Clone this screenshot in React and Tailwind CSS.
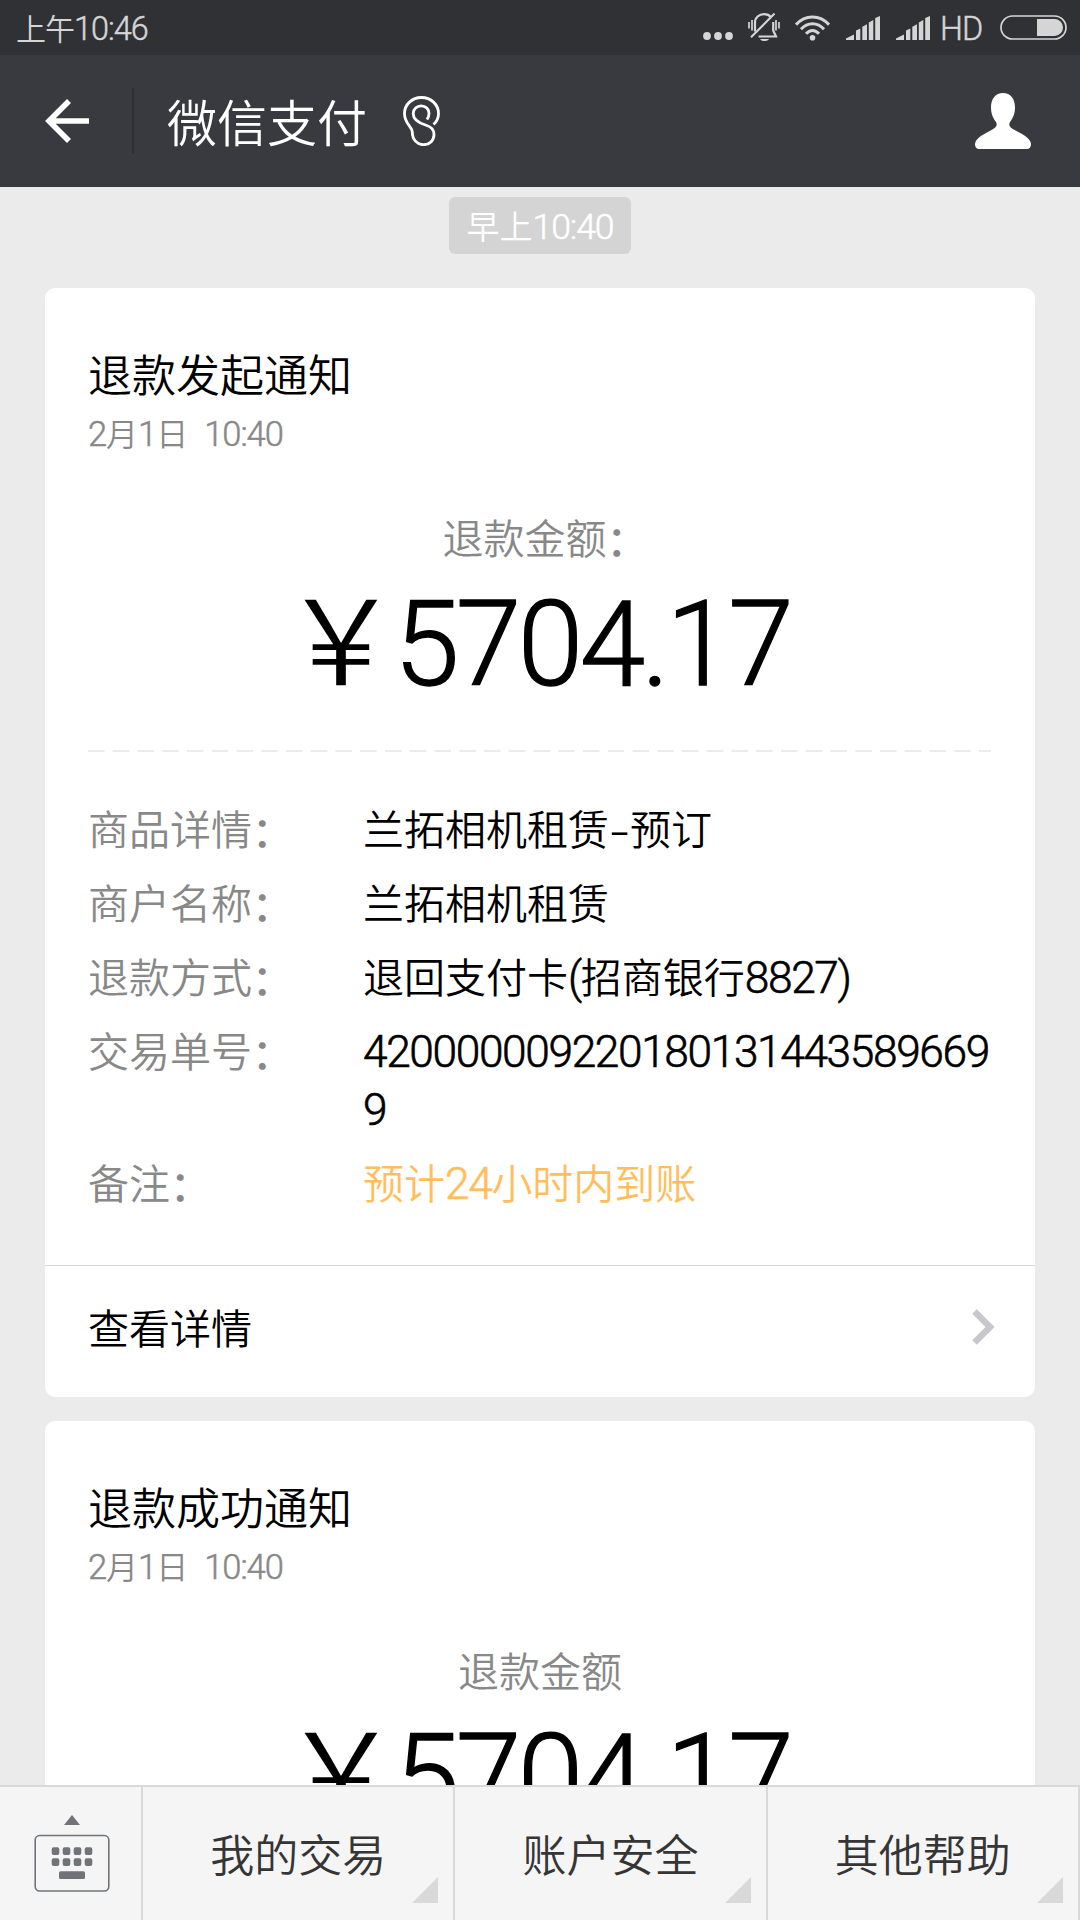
import React from 'react';

const notices = [
    {
        title: '退款发起通知',
        date: '2月1日',
        time: '10:40',
        label: '退款金额：',
        amount: '5704.17',
        rows: [
            { name: '商品详情：', value: '兰拓相机租赁-预订' },
            { name: '商户名称：', value: '兰拓相机租赁' },
            { name: '退款方式：', value: '退回支付卡(招商银行8827)' },
            { name: '交易单号：', value: '4200000092201801314435896699' },
            { name: '备注：', value: '预计24小时内到账', highlight: true },
        ],
    },
    {
        title: '退款成功通知',
        date: '2月1日',
        time: '10:40',
        label: '退款金额',
        amount: '5704.17',
        rows: [],
    },
];

const menus = ['我的交易', '账户安全', '其他帮助'];

// Latin runs are set in a slightly larger, tighter face than the Chinese text
function Mixed({ children }) {
    return children.split(/([0-9A-Z:.()]+|：|-)/).map((part, index) => {
        if (part === '：') {
            return (
                <span key={index} className="inline-block w-[31px] translate-y-[2px] font-medium leading-none">
                    {part}
                </span>
            );
        }
        if (part === '-') {
            return (
                <span key={index} className="inline-block w-[21px] scale-x-150 text-center leading-none">
                    {part}
                </span>
            );
        }
        if (index % 2 === 1) {
            return (
                <span key={index} className="break-all font-['Roboto','Noto_Sans_CJK_SC',sans-serif] text-[1.08em] font-light leading-none tracking-[-0.031em] [-webkit-text-stroke:0.014em_currentColor]">
                    {part}
                </span>
            );
        }
        return part;
    });
}

function SignalIcon() {
    return (
        <svg width="34" height="24" viewBox="0 0 34 24" fill="#d5d5d5">
            <path d="M0 24V22.6L8 18.6V24Z" />
            <path d="M10 24V14.5L14.3 12.4V24Z" />
            <path d="M16.3 24V10.8L21 8.2V24Z" />
            <path d="M22.8 24V6.6L27.3 4V24Z" />
            <path d="M29.2 24V2L34 0V24Z" />
        </svg>
    );
}

function StatusBar() {
    return (
        <div className="flex h-[55px] shrink-0 items-center bg-[#303135] pl-4 pr-[13px] text-[#d5d5d5]">
            <span className="pt-[2px] text-[30px] leading-none tracking-[-1px]">
                <Mixed>上午10:46</Mixed>
            </span>
            <div className="ml-auto flex items-center">
                <svg width="30" height="28" viewBox="0 0 30 28" fill="#d5d5d5">
                    <circle cx="4" cy="22" r="3.9" />
                    <circle cx="15" cy="22" r="3.9" />
                    <circle cx="26" cy="22" r="3.9" />
                </svg>
                {/* Muted bell with vibration marks */}
                <svg className="ml-[15px]" width="32" height="29" viewBox="0 0 32 29" fill="none" stroke="#d5d5d5" strokeWidth="1.7">
                    <path d="M7 18.5V9.5C7 4.5 11 1.2 16 1.2C19 1.2 21.5 2.3 23 4.2" strokeWidth="2.2" />
                    <path d="M25.2 9V17.5L28 23.5H10.5" strokeWidth="2.2" />
                    <path d="M3 24.3L26.5 0.6" strokeWidth="2.2" />
                    <path d="M1 9V15.5M4 7V17.5M28 7V17.5M31 9V15.5" />
                    <path d="M12 26H21C19.5 28.8 13.5 28.8 12 26Z" fill="#d5d5d5" stroke="none" />
                </svg>
                <svg className="ml-[15px]" width="35" height="26" viewBox="0 0 35 26" fill="none" stroke="#d5d5d5" strokeWidth="3">
                    <path d="M1 9.7C10 -0.7 25 -0.7 34 9.7" />
                    <path d="M6 14.2C12.5 6.8 22.5 6.8 29 14.2" />
                    <path d="M11 18.8C15 14.4 20 14.4 24 18.8" />
                    <circle cx="17.5" cy="22.8" r="2.8" fill="#d5d5d5" stroke="none" />
                </svg>
                <div className="ml-4 flex gap-4">
                    <SignalIcon />
                    <SignalIcon />
                </div>
                <span className="ml-[10px] w-[47px] pt-[2px] text-[30px] leading-none">
                    <Mixed>HD</Mixed>
                </span>
                <svg className="ml-[13px]" width="67" height="25" viewBox="0 0 67 25">
                    <rect x="1" y="1" width="65" height="23" rx="11.5" fill="none" stroke="#d5d5d5" strokeWidth="1.7" />
                    <path d="M37 4H54.5A8.5 8.5 0 0 1 54.5 21H37Z" fill="#d5d5d5" />
                </svg>
            </div>
        </div>
    );
}

function Header() {
    return (
        <header className="flex h-[132px] shrink-0 items-center bg-[#393a3f] pl-[45px] pr-[49px] text-white">
            <svg width="44" height="44" viewBox="0 0 44 44" fill="none" stroke="#fff" strokeWidth="5.6">
                <path d="M24 2L4 22L24 42M4 22H44" />
            </svg>
            <div className="ml-[43px] h-[66px] w-[2px] bg-[#2e2f33]" />
            <h1 className="ml-[33px] pb-[2px] text-[50px] leading-none">微信支付</h1>
            {/* Earpiece mode */}
            <svg className="ml-9" width="37" height="50" viewBox="0 0 37 50" fill="none" stroke="#fff" strokeWidth="2.8">
                <path d="M30.5 28.5C34 25.5 35.5 22 35.5 17.5C35.5 8.5 28 1.5 18.5 1.5C9 1.5 1.5 8.5 1.5 17.5C1.5 28 9 30 9.3 36C9.3 43.5 14 48.7 20.5 48.7C27 48.7 31 44 31 38.5C31 33.5 28 30.5 22.5 29C14.5 26.5 10.2 23 10.2 17.5C10.2 13 13.8 9.8 18.2 9.8C22.8 9.8 26 13.3 26 17.5C26 20 25.4 21.5 24 23.5" />
            </svg>
            <svg className="ml-auto" width="56" height="56" viewBox="0 0 56 56" fill="#fff">
                <path d="M28 0C35.5 0 40 5.5 40 14.5C40 21.5 37.5 25.5 35 29C33.8 31 34.2 33 35.8 34.4C40 38 47 40 52 44.5C55.2 47.3 56 49.5 56 51.5C56 54 54.3 56 52 56H4C1.7 56 0 54 0 51.5C0 49.5 0.8 47.3 4 44.5C9 40 16 38 20.2 34.4C21.8 33 22.2 31 21 29C18.5 25.5 16 21.5 16 14.5C16 5.5 20.5 0 28 0Z" />
            </svg>
        </header>
    );
}

function NoticeCard({ notice }) {
    return (
        <section className="shrink-0 rounded-[10px] bg-white">
            <div className="px-[43px] pt-[55px]">
                <h2 className="text-[44px] leading-[60px] text-black">{notice.title}</h2>
                <p className="flex gap-[16px] text-[32px] leading-[58px] text-[#888]">
                    <span><Mixed>{notice.date}</Mixed></span>
                    <span><Mixed>{notice.time}</Mixed></span>
                </p>
                <p className="mt-[46px] text-center text-[41px] leading-[58px] text-[#888]">
                    <Mixed>{notice.label}</Mixed>
                </p>
                <p className="flex h-[150px] items-baseline justify-center pr-[8px] pt-[14px] text-[118px] leading-[110px] text-black">
                    <span className="w-[112px]">￥</span>
                    <span className="font-['Roboto',sans-serif] font-light tracking-[-0.03em] [-webkit-text-stroke:1.3px_currentColor]">
                        {notice.amount}
                    </span>
                </p>
                <svg className="mt-[35px] block" width="903" height="2">
                    <line x1="0" y1="1" x2="903" y2="1" stroke="#ebebeb" strokeWidth="2" strokeDasharray="16.5 8.25" />
                </svg>
            </div>

            {notice.rows.length > 0 && (
                <>
                    <ul className="flex flex-col gap-4 px-[43px] pb-[55px] pt-[46px] text-[41px] leading-[58px]">
                        {notice.rows.map((row, index) => (
                            <li key={index} className="flex">
                                <span className="w-[275px] shrink-0 text-[#888]">
                                    <Mixed>{row.name}</Mixed>
                                </span>
                                <span className={row.highlight ? 'w-[632px] text-[#ffbe5b]' : 'w-[632px] text-black'}>
                                    <Mixed>{row.value}</Mixed>
                                </span>
                            </li>
                        ))}
                    </ul>
                    <div className="flex h-[132px] items-center justify-between border-t border-[#d9d9d9] pb-[9px] pl-[43px] pr-[40px]">
                        <span className="pb-[2px] text-[41px] leading-none text-black">查看详情</span>
                        <svg width="23" height="36" viewBox="0 0 23 36" fill="none" stroke="#c7c7cc" strokeWidth="6.5">
                            <path d="M2.5 2.5L18 18L2.5 33.5" />
                        </svg>
                    </div>
                </>
            )}
        </section>
    );
}

function BottomMenu() {
    return (
        <nav className="flex h-[135px] shrink-0 border-t-2 border-[#d9d9d9] bg-[#f5f5f5]">
            <div className="w-[143px] border-r-2 border-[#d9d9d9] pl-[34px] pt-[28px]">
                <svg width="76" height="78" viewBox="0 0 76 78" fill="#707479">
                    <path d="M30 10L38 0L46 10Z" />
                    <rect x="1.2" y="20.5" width="73.6" height="55.5" rx="4.5" fill="none" stroke="#707479" strokeWidth="1.6" />
                    {[0, 1, 2, 3].map((i) => (
                        <g key={i}>
                            <rect x={17.7 + i * 11} y="32.3" width="7.6" height="7.6" rx="2" />
                            <rect x={17.7 + i * 11} y="43.3" width="7.6" height="7.6" rx="2" />
                        </g>
                    ))}
                    <rect x="25" y="56.3" width="26" height="7.8" rx="1.5" />
                </svg>
            </div>
            {menus.map((menu) => (
                <div key={menu} className="relative flex flex-1 items-center justify-center border-r-2 border-[#d9d9d9]">
                    <span className="pb-[2px] text-[44px] leading-none text-[#353535]">{menu}</span>
                    <svg className="absolute bottom-[17px] right-[15px]" width="26" height="26" fill="#d9d9d9">
                        <path d="M26 0V26H0Z" />
                    </svg>
                </div>
            ))}
        </nav>
    );
}

function App() {
    return (
        <div className="flex h-[1920px] w-[1080px] flex-col overflow-hidden bg-[#ebebeb] font-['Noto_Sans_CJK_SC',sans-serif] font-[350]">
            <StatusBar />
            <Header />
            <main className="flex min-h-0 flex-1 flex-col overflow-hidden px-[45px] pt-[10px]">
                <div className="flex h-[57px] w-[182px] shrink-0 items-center justify-center self-center rounded-md bg-[#d4d4d4] pt-[3px] text-[33px] leading-none text-white">
                    <span><Mixed>早上10:40</Mixed></span>
                </div>
                <div className="mt-[34px] flex flex-col gap-[24px]">
                    {notices.map((notice) => (
                        <NoticeCard key={notice.title} notice={notice} />
                    ))}
                </div>
            </main>
            <BottomMenu />
        </div>
    );
}

export default App;
